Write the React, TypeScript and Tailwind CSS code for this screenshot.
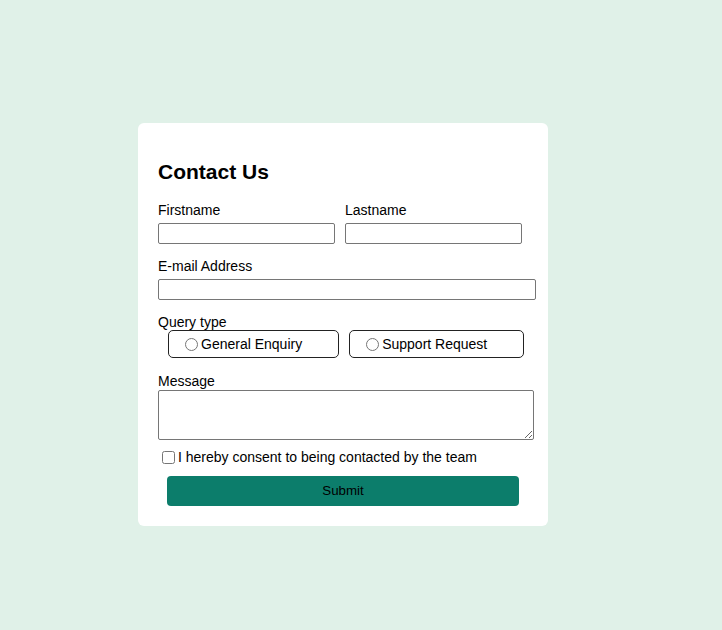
import { useState } from "react";

export default function App() {
  const [query, setQuery] = useState("");

  return (
    <div className="min-h-screen bg-[#e0f1e8] pl-[138px] pt-[123px] font-['Liberation_Sans',Arial,sans-serif] text-black">
      <form
        className="w-[410px] rounded-[6px] bg-white pl-[20px] pt-[37px] pb-[20px]"
        onSubmit={(e) => e.preventDefault()}
      >
        <h2 className="h-[24px] text-[21px] font-bold leading-[24px]">Contact Us</h2>

        {/* names */}
        <div className="mt-[18px] flex gap-[10px]">
          <div>
            <label className="block h-[16px] text-[14px] leading-[16px]">Firstname</label>
            <input
              type="text"
              className="mt-[5px] block h-[21px] w-[177px] rounded-[2px] border border-[#767676] px-[2px] text-[13px]"
            />
          </div>
          <div>
            <label className="block h-[16px] text-[14px] leading-[16px]">Lastname</label>
            <input
              type="text"
              className="mt-[5px] block h-[21px] w-[177px] rounded-[2px] border border-[#767676] px-[2px] text-[13px]"
            />
          </div>
        </div>

        <div className="mt-[14px]">
          <label className="block h-[16px] text-[14px] leading-[16px]">E-mail Address</label>
          <input
            type="email"
            className="mt-[5px] block h-[21px] w-[378px] rounded-[2px] border border-[#767676] px-[2px] text-[13px]"
          />
        </div>

        {/* query type */}
        <div className="mt-[14px]">
          <div className="h-[16px] text-[14px] leading-[16px]">Query type</div>
          <div className="ml-[10px] flex gap-[10px]">
            {["General Enquiry", "Support Request"].map((q) => (
              <label
                key={q}
                className="flex h-[28px] items-center rounded-[5px] border border-[#222] pl-[11px] pr-[36px] text-[14px]"
              >
                <input
                  type="radio"
                  name="query"
                  checked={query === q}
                  onChange={() => setQuery(q)}
                  className="ml-[5px] mr-[3px] h-[13px] w-[13px]"
                />
                {q}
              </label>
            ))}
          </div>
        </div>

        <div className="mt-[15px]">
          <label className="block h-[16px] text-[14px] leading-[16px]">Message</label>
          <textarea className="mt-[1px] block h-[50px] w-[376px] rounded-[2px] border border-[#767676] px-[2px] text-[13px]" />
        </div>

        <label className="mt-[9px] flex h-[16px] items-center text-[14px] leading-[16px]">
          <input type="checkbox" className="ml-[4px] mr-[3px] h-[13px] w-[13px]" />
          I hereby consent to being contacted by the team
        </label>

        <button
          type="submit"
          className="mt-[11px] ml-[9px] block h-[30px] w-[352px] rounded-[4px] bg-[#0c7d6b] text-[13.33px] text-black"
        >
          Submit
        </button>
      </form>
    </div>
  );
}
